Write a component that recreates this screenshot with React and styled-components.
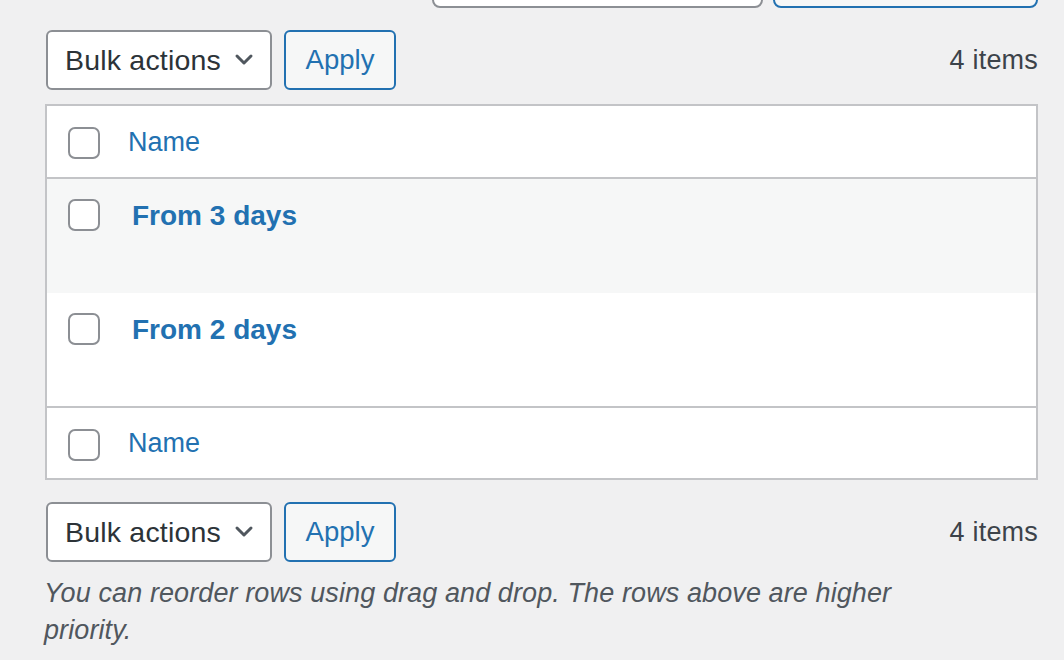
import React from "react";
import styled, { createGlobalStyle } from "styled-components";

const Global = createGlobalStyle`
  html, body { margin: 0; padding: 0; background: #f0f0f1; }
  body {
    font-family: "Liberation Sans", Arial, sans-serif;
    color: #3c434a;
    overflow: hidden;
  }
`;

const Page = styled.div`
  padding: 0 26px 0 45px;
`;

const SearchBox = styled.div`
  display: flex;
  justify-content: flex-end;
  gap: 10px;
  margin-top: -52px;
`;

const SearchInput = styled.input`
  box-sizing: border-box;
  width: 331px;
  height: 60px;
  border: 2px solid #8c8f94;
  border-radius: 8px;
  background: #fff;
`;

const SearchButton = styled.button`
  box-sizing: border-box;
  width: 265px;
  height: 60px;
  border: 2px solid #2271b1;
  border-radius: 8px;
  background: #f6f7f7;
`;

const TableNav = styled.div`
  display: flex;
  align-items: center;
  gap: 12px;
  margin: ${(p) => p.$margin};
`;

const Select = styled.div`
  box-sizing: border-box;
  display: flex;
  align-items: center;
  justify-content: space-between;
  width: 226px;
  height: 60px;
  padding: 0 16px 0 17px;
  border: 2px solid #8c8f94;
  border-radius: 6px;
  background: #fff;
  font-size: 28.5px;
  letter-spacing: 0.2px;
  color: #2c3338;
`;

const ApplyButton = styled.button`
  box-sizing: border-box;
  width: 112px;
  height: 60px;
  border: 2px solid #2271b1;
  border-radius: 6px;
  background: #f6f7f7;
  color: #2271b1;
  font-family: inherit;
  font-size: 27.5px;
  padding: 0;
`;

const Count = styled.span`
  margin-left: auto;
  font-size: 27px;
  letter-spacing: 0.2px;
  color: #3c434a;
`;

const Table = styled.div`
  border: 2px solid #c3c4c7;
  background: #fff;
`;

const Row = styled.div`
  display: flex;
  align-items: ${(p) => (p.$head ? "center" : "flex-start")};
  box-sizing: border-box;
  height: ${(p) => p.$h}px;
  padding: ${(p) => (p.$head ? "0" : "20px")} 0 0 21px;
  background: ${(p) => (p.$alt ? "#f6f7f7" : "#fff")};
  border-bottom: ${(p) => (p.$lineBottom ? "2px solid #c3c4c7" : "none")};
`;

const Checkbox = styled.span`
  box-sizing: border-box;
  flex: none;
  width: 32px;
  height: 32px;
  border: 2px solid #8c8f94;
  border-radius: 7px;
  background: #fff;
  margin-top: ${(p) => p.$mt || 0}px;
`;

const ColumnLink = styled.span`
  margin-left: ${(p) => p.$ml}px;
  font-size: ${(p) => (p.$bold ? 28 : 27)}px;
  color: #2271b1;
  font-weight: ${(p) => (p.$bold ? 700 : 400)};
  line-height: 34px;
`;

const Note = styled.p`
  margin: 13px 0 0 -1px;
  font-size: 27px;
  letter-spacing: 0.1px;
  line-height: 37px;
  font-style: italic;
  color: #50575e;
  max-width: 900px;
`;

const Chevron = () => (
  <svg width="20" height="14" viewBox="0 0 20 14">
    <polyline
      points="3,3 10,10 17,3"
      fill="none"
      stroke="#50575e"
      strokeWidth="3"
      strokeLinecap="round"
      strokeLinejoin="round"
    />
  </svg>
);

const Nav = ({ margin }) => (
  <TableNav $margin={margin}>
    <Select>
      <span>Bulk actions</span>
      <Chevron />
    </Select>
    <ApplyButton>Apply</ApplyButton>
    <Count>4 items</Count>
  </TableNav>
);

export default function App() {
  return (
    <Page>
      <Global />
      <SearchBox>
        <SearchInput />
        <SearchButton />
      </SearchBox>
      <Nav margin="22px 0 14px 1px" />
      <Table>
        <Row $head $h={73} $lineBottom>
          <Checkbox $mt={3} />
          <ColumnLink $ml={28}>Name</ColumnLink>
        </Row>
        <Row $alt $h={114}>
          <Checkbox />
          <ColumnLink $ml={32} $bold>From 3 days</ColumnLink>
        </Row>
        <Row $h={115} $lineBottom>
          <Checkbox />
          <ColumnLink $ml={32} $bold>From 2 days</ColumnLink>
        </Row>
        <Row $head $h={70}>
          <Checkbox $mt={3} />
          <ColumnLink $ml={28}>Name</ColumnLink>
        </Row>
      </Table>
      <Nav margin="22px 0 0 1px" />
      <Note>
        You can reorder rows using drag and drop. The rows above are higher
        priority.
      </Note>
    </Page>
  );
}
